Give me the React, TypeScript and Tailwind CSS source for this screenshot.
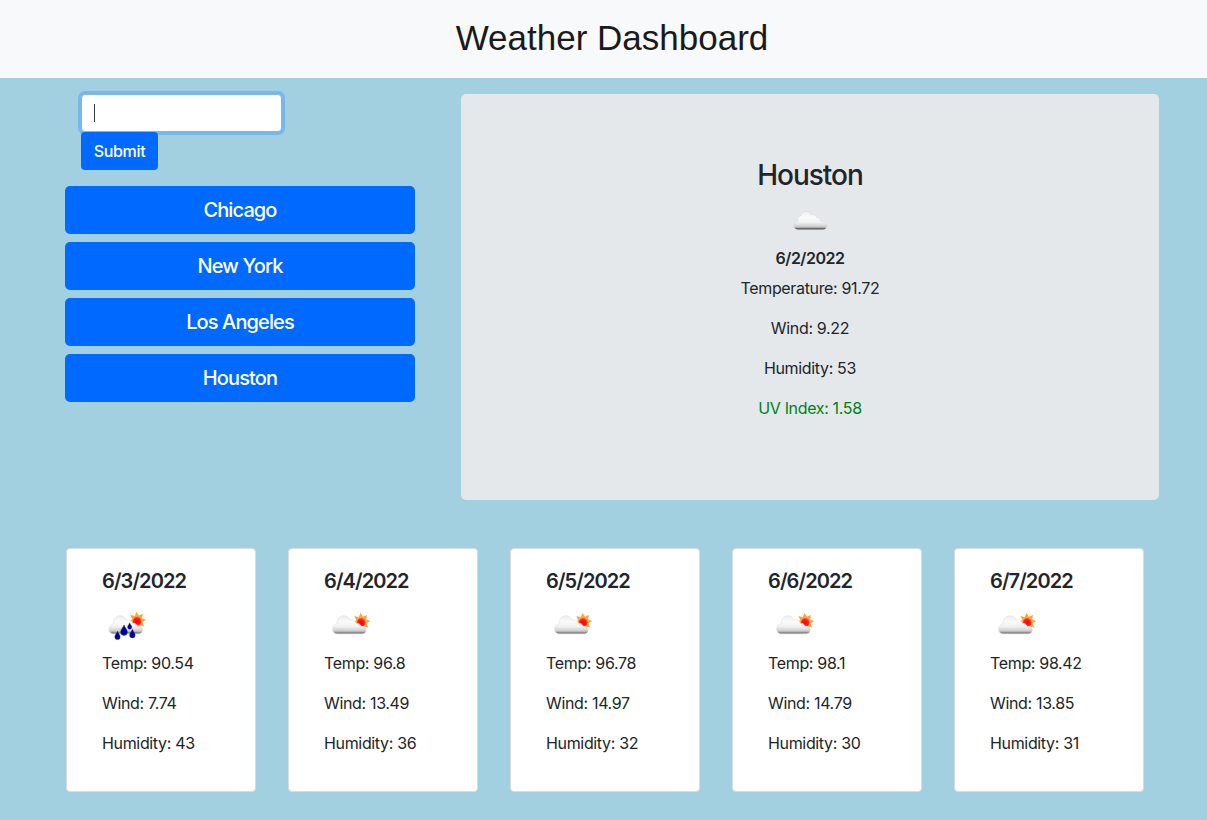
import { useId } from 'react';

type Kind = 'cloud' | 'sunCloud' | 'rain';

const RAYS = [0, 45, 90, 135, 180, 225, 270, 315];

function Drop({ x, y, s }: { x: number; y: number; s: number }) {
  return (
    <path
      transform={`translate(${x} ${y}) scale(${s})`}
      d="M0 -4.8C.6 -2.6 2.9 -.9 2.9 1.3A2.9 2.9 0 0 1 -2.9 1.3C-2.9 -.9 -.6 -2.6 0 -4.8Z"
      fill="#00009a"
      stroke="#28287a"
      strokeWidth=".5"
    />
  );
}

function WeatherIcon({ kind }: { kind: Kind }) {
  const id = useId();
  const body = `${id}-body`;
  const sun = `${id}-sun`;
  return (
    <svg width="50" height="50" viewBox="0 0 50 50" className="block">
      <defs>
        <linearGradient id={body} x1="0" y1="0" x2="0" y2="1">
          <stop offset="0" stopColor="#ececec" />
          <stop offset=".3" stopColor="#fbfbfb" />
          <stop offset=".58" stopColor="#f2f2f2" />
          <stop offset=".8" stopColor="#d2d2d2" />
          <stop offset=".86" stopColor={kind === 'cloud' ? '#b5b5b5' : '#bababa'} />
          <stop offset=".93" stopColor={kind === 'cloud' ? '#5c5c5c' : '#858585'} />
          <stop offset="1" stopColor="#a8a8a8" />
        </linearGradient>
        <radialGradient id={sun} cx=".45" cy=".6" r=".6">
          <stop offset="0" stopColor="#ff0012" />
          <stop offset=".65" stopColor="#ff1a1a" />
          <stop offset="1" stopColor="#ff6a24" />
        </radialGradient>
      </defs>
      {kind !== 'cloud' && (
        <g transform={kind === 'rain' ? 'translate(35.2 19.6)' : 'translate(37.3 20.8)'}>
          {RAYS.map((a) => (
            <path key={a} transform={`rotate(${a - 5})`} d="M-1.9 -5L0 -9L1.9 -5Z" fill="#ffa030" />
          ))}
          <circle r="5.5" fill="#ffa23c" />
          <circle cy=".4" r="4.3" fill={`url(#${sun})`} />
        </g>
      )}
      {kind === 'cloud' ? (
        <path
          d="M12.8 34C10.4 33.6 8.8 31.8 8.8 29.6C8.8 27.3 10.4 25.8 12.7 25.3C12 22.6 13.2 20.4 15.9 19.8C16.5 16.8 18.7 15.3 21.5 15.3C24 15.3 25.5 16.5 26.3 18.7C29 18.1 31.3 19.6 31.9 21.9C34.3 21.6 35.6 23.2 35.9 25.5C38.7 24.5 42 26.4 42 29.3C42 31.8 40.4 33.7 38 34Z"
          fill={`url(#${body})`}
          stroke="#d3d5d6"
          strokeWidth=".5"
        />
      ) : (
        <path
          transform={kind === 'rain' ? 'translate(-1.7 0)' : undefined}
          d="M13 33C10.6 32.7 8.6 30.8 8.6 28.2C8.6 25.4 10.3 23.3 13.1 22.7C13.2 17.6 16.2 14.8 19.7 14.8C22.7 14.8 24.9 16.4 26 19.2C29 18 31.7 19.6 32.2 22.3C34.7 21.8 36.6 23.2 37.2 25.4C39.5 24.6 42.3 26 42.3 28.7C42.3 31 40.7 32.7 38.4 33Z"
          fill={`url(#${body})`}
          stroke="#d8d8d8"
          strokeWidth=".5"
        />
      )}
      {kind === 'rain' && (
        <>
          <Drop x={15.5} y={34.7} s={0.92} />
          <Drop x={22} y={29.6} s={1.15} />
          <Drop x={27.7} y={25.2} s={0.72} />
          <Drop x={30.4} y={32.9} s={0.95} />
        </>
      )}
    </svg>
  );
}

const cities = ['Chicago', 'New York', 'Los Angeles', 'Houston'];

const forecast: { date: string; kind: Kind; temp: string; wind: string; humidity: string }[] = [
  { date: '6/3/2022', kind: 'rain', temp: '90.54', wind: '7.74', humidity: '43' },
  { date: '6/4/2022', kind: 'sunCloud', temp: '96.8', wind: '13.49', humidity: '36' },
  { date: '6/5/2022', kind: 'sunCloud', temp: '96.78', wind: '14.97', humidity: '32' },
  { date: '6/6/2022', kind: 'sunCloud', temp: '98.1', wind: '14.79', humidity: '30' },
  { date: '6/7/2022', kind: 'sunCloud', temp: '98.42', wind: '13.85', humidity: '31' },
];

export default function App() {
  return (
    <div className="h-[820px] w-[1207px] overflow-hidden bg-[#a2d0e0] font-['Inter',sans-serif] text-base leading-6 tracking-[-0.34px] text-[#212529]">
      <header className="flex h-[78px] items-center justify-center bg-[#f8f9fa] pb-0.5 pl-[17px]">
        <h1 className="font-['Liberation_Sans',Arial,sans-serif] text-[35px] leading-[52px] tracking-normal text-[#1a1a1a]">
          Weather Dashboard
        </h1>
      </header>

      <main className="pt-4">
        <div className="flex pl-[65px]">
          <section className="w-[350px]">
            <form className="flex flex-col items-start pl-4" onSubmit={(e) => e.preventDefault()}>
              <div className="flex h-[38px] w-[201px] items-center rounded border border-[#7bb7ed] bg-white pl-3 shadow-[0_0_0_3px_#79b7e9]">
                <span className="mb-px h-[18px] w-px bg-[#343a40]" />
              </div>
              <button className="relative h-[38px] w-[77px] rounded bg-[#0069ff] font-[450] text-white">
                Submit
              </button>
            </form>
            <div className="mt-4 flex flex-col gap-2">
              {cities.map((name) => (
                <button
                  key={name}
                  className="h-12 rounded-[5px] bg-[#0069ff] text-xl font-[450] tracking-[-0.88px] text-white"
                >
                  {name}
                </button>
              ))}
            </div>
          </section>

          <section className="ml-[46px] flex h-[406px] w-[698px] flex-col items-center rounded-[5px] bg-[#e4e8eb] pt-16">
            <h2 className="pt-px text-[28px] font-[550] leading-[33px] tracking-[-1px]">Houston</h2>
            <div className="mt-1">
              <WeatherIcon kind="cloud" />
            </div>
            <h3 className="mt-0.5 font-semibold leading-5 tracking-[-0.5px]">6/2/2022</h3>
            <div className="mt-2 flex flex-col items-center gap-4">
              <p>Temperature: 91.72</p>
              <p>Wind: 9.22</p>
              <p>Humidity: 53</p>
              <p className="text-[#008017]">UV Index: 1.58</p>
            </div>
          </section>
        </div>

        <section className="mt-12 flex gap-8 pl-[66px]">
          {forecast.map((day) => (
            <article
              key={day.date}
              className="h-[244px] w-[190px] rounded border border-[#d5dde0] bg-white pl-[35px] pt-5"
            >
              <h3 className="text-xl font-semibold leading-6 tracking-[-0.9px]">{day.date}</h3>
              <div className="mt-2">
                <WeatherIcon kind={day.kind} />
              </div>
              <div className="flex flex-col gap-4">
                <p>Temp: {day.temp}</p>
                <p>Wind: {day.wind}</p>
                <p>Humidity: {day.humidity}</p>
              </div>
            </article>
          ))}
        </section>
      </main>
    </div>
  );
}
